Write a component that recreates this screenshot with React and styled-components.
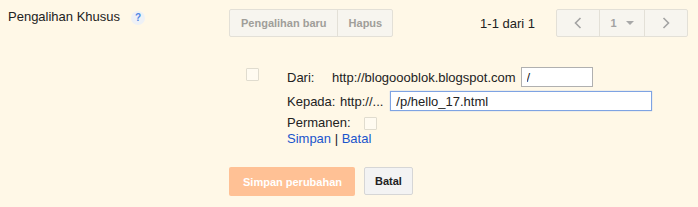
import React from "react";
import styled, { createGlobalStyle } from "styled-components";

const GlobalStyle = createGlobalStyle`
  body {
    margin: 0;
    background: #fff8e7;
    font-family: "Liberation Sans", Arial, sans-serif;
    font-size: 13px;
    color: #222;
  }
`;

export default function App() {
  return (
    <>
      <GlobalStyle />
      <Section>
        <Label>
          Pengalihan Khusus
          <Help>?</Help>
        </Label>
        <Content>
          <Toolbar>
            <ButtonGroup>
              <GroupButton>Pengalihan baru</GroupButton>
              <GroupButton>Hapus</GroupButton>
            </ButtonGroup>
            <PageInfo>1-1 dari 1</PageInfo>
            <Pager>
              <PagerCell $w={42}>
                <svg width="8" height="12" viewBox="0 0 8 12">
                  <path d="M6.5 1 L1.5 6 L6.5 11" fill="none" stroke="#a3a3a3" strokeWidth="1.6" />
                </svg>
              </PagerCell>
              <PagerCell $w={44}>
                <PageNum>1</PageNum>
                <svg width="8" height="4" viewBox="0 0 8 4">
                  <path d="M0 0 L8 0 L4 4 Z" fill="#a8a8a8" />
                </svg>
              </PagerCell>
              <PagerCell $w={42}>
                <svg width="8" height="12" viewBox="0 0 8 12">
                  <path d="M1.5 1 L6.5 6 L1.5 11" fill="none" stroke="#a3a3a3" strokeWidth="1.6" />
                </svg>
              </PagerCell>
            </Pager>
          </Toolbar>

          <Entry>
            <Check />
            <Form>
              <Row>
                <FieldLabel $w={45}>Dari:</FieldLabel>
                <span>http://blogoooblok.blogspot.com</span>
                <Input $w={72} defaultValue="/" />
              </Row>
              <Row $top={4}>
                <FieldLabel $w={53}>Kepada:</FieldLabel>
                <span>http://...</span>
                <Input $w={262} $focus $gap={7} defaultValue="/p/hello_17.html" />
              </Row>
              <TextRow $top={4}>
                Permanen:
                <SmallCheck />
              </TextRow>
              <TextRow>
                <Link>Simpan</Link>&nbsp;|&nbsp;<Link>Batal</Link>
              </TextRow>
            </Form>
          </Entry>

          <Actions>
            <SaveButton>Simpan perubahan</SaveButton>
            <CancelButton>Batal</CancelButton>
          </Actions>
        </Content>
      </Section>
    </>
  );
}

const Section = styled.div`
  display: grid;
  grid-template-columns: 221px 1fr;
  padding: 9px 10px 0 8px;
`;

const Label = styled.div`
  display: flex;
  align-items: center;
  align-self: start;
  line-height: 16px;
`;

const Help = styled.span`
  display: inline-flex;
  align-items: center;
  justify-content: center;
  width: 14px;
  height: 14px;
  margin-left: 11px;
  margin-top: 2px;
  border-radius: 50%;
  background: #eef1f6;
  color: #4f86e4;
  font-size: 10px;
  font-weight: bold;
`;

const Content = styled.div`
  display: flex;
  flex-direction: column;
`;

const Toolbar = styled.div`
  display: flex;
  align-items: center;
  height: 28px;
`;

const ButtonGroup = styled.div`
  display: flex;
  height: 28px;
  box-sizing: border-box;
  border: 1px solid #e3e0d7;
  border-radius: 2px;
  background: #f7f5ef;
`;

const GroupButton = styled.div`
  display: flex;
  align-items: center;
  padding: 0 10px 0 11px;
  font-size: 11px;
  font-weight: bold;
  color: #a09e99;
  & + & {
    border-left: 1px solid #e3e0d7;
  }
`;

const PageInfo = styled.div`
  margin-left: auto;
  margin-right: 21px;
`;

const Pager = styled.div`
  display: flex;
  height: 28px;
  box-sizing: border-box;
  border: 1px solid #e3e0d7;
  border-radius: 2px;
  background: #f7f5ef;
`;

const PagerCell = styled.div`
  display: flex;
  align-items: center;
  justify-content: center;
  gap: 9px;
  width: ${(p) => p.$w}px;
  & + & {
    border-left: 1px solid #e3e0d7;
  }
`;

const PageNum = styled.span`
  font-size: 11px;
  font-weight: bold;
  color: #a3a3a3;
`;

const Entry = styled.div`
  display: flex;
  align-items: flex-start;
  margin-top: 30px;
  padding-left: 17px;
`;

const Check = styled.div`
  width: 13px;
  height: 13px;
  margin-top: 1px;
  box-sizing: border-box;
  border: 1px solid #e0dccf;
  border-radius: 1px;
  background: #fffbf1;
`;

const SmallCheck = styled(Check)`
  margin: 0 0 0 13px;
`;

const Form = styled.div`
  display: flex;
  flex-direction: column;
  margin-left: 28px;
`;

const Row = styled.div`
  display: flex;
  align-items: center;
  height: 20px;
  margin-top: ${(p) => p.$top || 0}px;
`;

const TextRow = styled.div`
  display: flex;
  align-items: center;
  line-height: 16px;
  margin-top: ${(p) => p.$top || 0}px;
`;

const FieldLabel = styled.span`
  width: ${(p) => p.$w}px;
`;

const Input = styled.input`
  width: ${(p) => p.$w}px;
  height: 20px;
  box-sizing: border-box;
  margin: 0 0 0 ${(p) => p.$gap || 5}px;
  padding: 0 5px;
  font-family: "Liberation Sans", Arial, sans-serif;
  font-size: 13px;
  color: #222;
  background: #fff;
  border: 1px solid ${(p) => (p.$focus ? "#7ea3e3" : "#b0b0b0")};
  box-shadow: ${(p) => (p.$focus ? "0 0 1px #9bb8ec" : "none")};
  outline: none;
`;

const Link = styled.a`
  color: #1a55cc;
  cursor: pointer;
`;

const Actions = styled.div`
  display: flex;
  align-items: flex-start;
  gap: 9px;
  margin-top: 20px;
`;

const SaveButton = styled.div`
  display: flex;
  align-items: center;
  height: 29px;
  padding: 0 13px 0 14px;
  border-radius: 2px;
  background: #ffc195;
  color: #fff;
  font-size: 11px;
  font-weight: bold;
`;

const CancelButton = styled.div`
  display: flex;
  align-items: center;
  height: 28px;
  box-sizing: border-box;
  padding: 0 10px;
  border: 1px solid #d6d6d6;
  border-radius: 2px;
  background: #f3f3f3;
  color: #222;
  font-size: 11px;
  font-weight: bold;
`;
